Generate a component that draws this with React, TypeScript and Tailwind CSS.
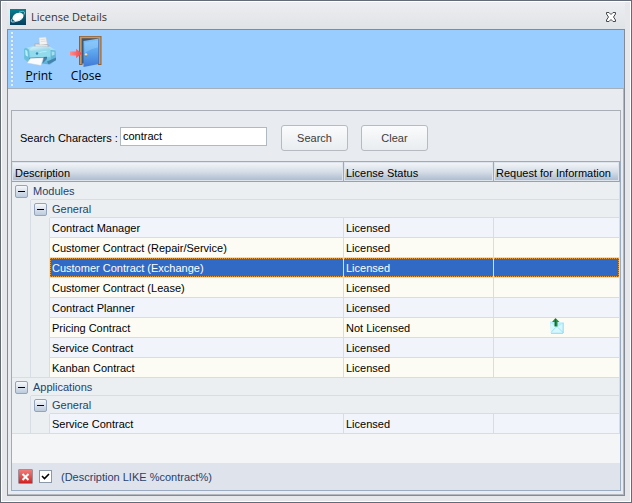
import { Fragment, useState } from "react";

type Row = { description: string; status: string; request?: boolean };
type Module = { name: string; group: string; rows: Row[] };

const modules: Module[] = [
  {
    name: "Modules",
    group: "General",
    rows: [
      { description: "Contract Manager", status: "Licensed" },
      { description: "Customer Contract (Repair/Service)", status: "Licensed" },
      { description: "Customer Contract (Exchange)", status: "Licensed" },
      { description: "Customer Contract (Lease)", status: "Licensed" },
      { description: "Contract Planner", status: "Licensed" },
      { description: "Pricing Contract", status: "Not Licensed", request: true },
      { description: "Service Contract", status: "Licensed" },
      { description: "Kanban Contract", status: "Licensed" },
    ],
  },
  {
    name: "Applications",
    group: "General",
    rows: [{ description: "Service Contract", status: "Licensed" }],
  },
];

function AppLogo() {
  return (
    <svg width="16" height="16" viewBox="0 0 16 16" aria-hidden="true">
      <defs>
        <linearGradient id="logo" x1="0" y1="0" x2="0" y2="1">
          <stop offset="0" stopColor="#07808f" />
          <stop offset="1" stopColor="#043d5c" />
        </linearGradient>
      </defs>
      <rect width="16" height="16" fill="url(#logo)" />
      <path d="M9 3.200c3.500-1.300 6-1 5.600.8-.2 1-1 2-1.600 2.600" fill="none" stroke="#8fc9d2" strokeWidth="0.800" />
      <ellipse cx="8" cy="8" rx="5.700" ry="4" fill="#fff" transform="rotate(-24 8 8)" />
      <path d="M2.500 9.500c-1.500 1.800-1.800 3.200-.5 3.500 2.500.4 7-1.300 10-4" fill="none" stroke="#cfe8ec" strokeWidth="0.900" />
    </svg>
  );
}

function PrinterIcon() {
  return (
    <svg width="34" height="32" viewBox="0 0 34 32" aria-hidden="true">
      <defs>
        <linearGradient id="body" x1="0" y1="0" x2="0" y2="1">
          <stop offset="0" stopColor="#b4e6f3" />
          <stop offset="0.500" stopColor="#86d3ea" />
          <stop offset="1" stopColor="#54acd2" />
        </linearGradient>
        <linearGradient id="lid" x1="0" y1="0" x2="1" y2="1">
          <stop offset="0" stopColor="#d9f4fb" />
          <stop offset="1" stopColor="#8bcfe4" />
        </linearGradient>
      </defs>
      <path d="M17 1.500l7-.5 1.500 8-8 1z" fill="#f3f3f2" stroke="#c4c8cc" strokeWidth="0.600" />
      <path d="M18.500 3.500l5-.4M18.800 5.500l5-.4" stroke="#d4d6d8" strokeWidth="0.700" />
      <path d="M12.500 7.500l4-.8 1.500 2 7.500-.7 2.500 1.500-2.500 2.500H12z" fill="#b3b5b9" />
      <path d="M13.500 8.300l12 .8v1.400l-12 .3z" fill="#e2e3e4" />
      <path d="M4 12l6-1.500 18 .2 5.500 3.300.5 10-6 4.500-8-1-14-1.500-4-3V13z" fill="url(#body)" />
      <path d="M8 13l3-2.300 15.500.3 2 3.200-20 .6z" fill="url(#lid)" />
      <path d="M2 13q1-1.500 3-.8 2 .7 2.300 3l.5 8.800q-4.300 0-5.500-2.500z" fill="#68bfdc" />
      <path d="M3.200 13.800q1.500 0 2.200 1.700l.6 5q-2-.2-2.500-1.500z" fill="#b9edf6" />
      <path d="M28.500 14l5 .5.5 7-5 3z" fill="#64b6d8" />
      <path d="M29.500 15.500l3 .2v3l-2.700 1z" fill="#a5e0ef" />
      <path d="M25 25.500l9-4v2.700l-7.500 4z" fill="#4583ac" />
      <path d="M8 15l20-.7v6.500l-19.700 1.700z" fill="#91dbed" />
      <path d="M7.500 21.800l17.500-1v2l-17.500 1z" fill="#34779d" />
      <path d="M17.500 16.500q3-1 7-1" fill="none" stroke="#c4f1f9" strokeWidth="0.800" />
      <circle cx="15" cy="17.500" r="1.200" fill="#2f8bb4" />
      <path d="M8.500 22.300l13-.5-2.500 7.700-14-2.500z" fill="#f9fbfd" stroke="#b9cedf" strokeWidth="0.500" />
      <path d="M21.700 22.300l3.300.7-4.500 4.500z" fill="#497fa7" />
    </svg>
  );
}

function DoorIcon() {
  return (
    <svg width="34" height="32" viewBox="0 0 34 32" aria-hidden="true">
      <defs>
        <linearGradient id="door" x1="0" y1="0" x2="0" y2="1">
          <stop offset="0" stopColor="#7fc4fb" />
          <stop offset="0.500" stopColor="#5ba3ec" />
          <stop offset="1" stopColor="#4079d6" />
        </linearGradient>
        <linearGradient id="arrow" x1="0" y1="0" x2="1" y2="0">
          <stop offset="0" stopColor="#ff8f8f" />
          <stop offset="1" stopColor="#ee4348" />
        </linearGradient>
      </defs>
      <path d="M10 0h22.500v29H29V3H13.500v26H10z" fill="#8e6238" />
      <path d="M11 .8h20.500V28H30V2.300H12.500V28H11z" fill="#c99660" />
      <path d="M13 2.500h17v25H13z" fill="#3f5874" />
      <path d="M14.500 5L30 2.500V28L14.500 31z" fill="url(#door)" />
      <path d="M15.500 6.500L29 4.500v7c-6 1-10 3-13.500 6z" fill="#a2d6ff" opacity="0.400" />
      <path d="M29.500 3v25" stroke="#3b69b5" strokeWidth="0.600" />
      <path d="M1 15.500h6v-2.700l6 4.700-6 4.700v-2.700H1z" fill="url(#arrow)" />
      <circle cx="17" cy="18.500" r="1.300" fill="#f5dfa6" />
      <path d="M16 20h2" stroke="#8d713b" strokeWidth="0.700" />
    </svg>
  );
}

function MailIcon() {
  return (
    <svg width="14" height="16" viewBox="0 0 14 16" className="mx-auto block" aria-hidden="true">
      <path d="M0 3.500l13 1V15H1z" fill="#b9ecfb" />
      <path d="M1 5l5.500 5L13 5.500V15H1z" fill="#d8f6fe" />
      <path d="M1 14.500l4.500-5M13 14.500L8 9.500" stroke="#8edcf4" strokeWidth="0.800" />
      <path d="M1 15.300h12M13.200 4.500V15" fill="none" stroke="#6bd3f2" strokeWidth="0.800" />
      <path d="M5.500 0l4 4H7.500v4.500h-3V4H2z" fill="#278d46" />
      <path d="M5.500 1v7" stroke="#176a30" strokeWidth="1.200" />
    </svg>
  );
}

function Expander({ open, label, onClick }: { open: boolean; label: string; onClick: () => void }) {
  return (
    <button
      type="button"
      aria-label={label}
      aria-expanded={open}
      onClick={onClick}
      className="ml-[3px] flex size-[13px] items-center justify-center rounded-[2px] border border-[#93a4bc] bg-linear-to-b from-[#f6f8fb] to-[#bccbdd]"
    >
      <svg width="7" height="7" viewBox="0 0 7 7" aria-hidden="true">
        <path d={open ? "M0 3h7v1H0z" : "M0 3h3V0h1v3h3v1H4v3H3V4H0z"} fill="#000" />
      </svg>
    </button>
  );
}

const heading =
  "h-5 whitespace-nowrap border-b border-r border-[#8ea3bd] border-r-[#98aac0] px-0 pt-[2px] pb-0 text-left font-normal shadow-[inset_0_0_0_1px_#dde4ec]";
const line = "border-[#d6dde6]";
const focusBox = "h-[19px] border-y border-dotted border-[#e39a3c] leading-[19px]";
const plainBox = "h-[19px] leading-[21px]";
const pushButton =
  "h-[26px] w-[67px] rounded-[3px] border border-[#b6bbc2] bg-linear-to-b from-[#fafbfc] to-[#e9edf0] text-[#3c3c3c]";

export default function App() {
  const [text, setText] = useState("contract");
  const [filter, setFilter] = useState("contract");
  const [filterOn, setFilterOn] = useState(true);
  const [selected, setSelected] = useState("Customer Contract (Exchange)");
  const [closed, setClosed] = useState<string[]>([]);
  const toggle = (key: string) =>
    setClosed(closed.includes(key) ? closed.filter((k) => k !== key) : [...closed, key]);

  return (
    <div className="flex min-h-screen flex-col border border-[#636b78] bg-[#e5e7eb] font-['Liberation_Sans',Arial,sans-serif] text-[11px] leading-4 text-black">
      <div className="flex grow flex-col border border-white px-[5px] pb-[5px]">
        <header className="flex h-[27px] items-center bg-linear-to-b from-[#ededf2] to-[#e0e4e6] pl-[3px] pr-2 pt-[2px]">
          <AppLogo />
          <h1 className="ml-[5px] grow font-['Open_Sans','Noto_Sans',sans-serif] text-[11px] text-[#333]">License Details</h1>
          <button type="button" aria-label="Close window">
            <svg width="12" height="10" viewBox="0 0 12 10" className="block" aria-hidden="true">
              <path
                d="M1.500.5h2.500l2 2 2-2h2.500v1.500L8.500 5l2 3v1.500H8l-2-2-2 2H1.500V8l2-3-2-3z"
                fill="#fff"
                stroke="#45494f"
                strokeWidth="1"
              />
            </svg>
          </button>
        </header>

        <main className="flex grow flex-col border border-[#858b94] bg-[#e8ebf0]">
          <nav className="flex h-[59px] border-b border-[#a9afb8] bg-[#99ccff] pl-[3px] font-['Open_Sans','Noto_Sans',sans-serif] text-[12px]">
            <div className="my-[2px] w-[3px] bg-[radial-gradient(circle_at_1px_1px,#e2effc_1px,#7ba9d8_2px,transparent_2px)] bg-[length:3px_4px]" />
            <button type="button" className="ml-[3px] flex w-[44px] flex-col items-center pt-[6px]">
              <PrinterIcon />
              <span><u>P</u>rint</span>
            </button>
            <button type="button" className="ml-[3px] flex w-[44px] flex-col items-center pt-[6px]">
              <DoorIcon />
              <span>C<u>l</u>ose</span>
            </button>
          </nav>

          <div className="flex grow flex-col border-r border-b border-[#b3b7bf] pl-[3px] pb-[3px] pt-[21px] pr-[2px]">
            <form
              className="flex h-[51px] items-center border border-b-0 border-[#a9adb5] px-2 pt-1"
              onSubmit={(e) => {
                e.preventDefault();
                setFilter(text);
              }}
            >
              <label htmlFor="characters" className="w-[100px] whitespace-nowrap">Search Characters :</label>
              <input
                id="characters"
                value={text}
                onChange={(e) => setText(e.target.value)}
                className="mb-1 h-[19px] w-[147px] border border-[#b0b8c0] bg-white px-[2px] outline-none"
              />
              <button type="submit" className={`ml-[14px] ${pushButton}`}>Search</button>
              <button type="button" onClick={() => setText("")} className={`ml-[13px] ${pushButton}`}>Clear</button>
            </form>

            <section className="flex grow flex-col border border-[#9bacc2] bg-[#f4f5f7]">
              <table className="w-full table-fixed border-separate border-spacing-0">
                <colgroup>
                  <col className="w-[19px]" />
                  <col className="w-[19px]" />
                  <col />
                  <col className="w-[150px]" />
                  <col className="w-[126px]" />
                </colgroup>
                <thead>
                  <tr className="bg-linear-to-b from-[#f5f7f9] via-[#d5dde7] to-[#a5b5ca]">
                    <th scope="col" colSpan={3} className={heading}><span className="ml-[3px]">Description</span></th>
                    <th scope="col" className={heading}><span className="ml-[2px]">License Status</span></th>
                    <th scope="col" className={heading}><span className="ml-[2px]">Request for Information</span></th>
                  </tr>
                </thead>
                <tbody>
                  {modules.map((m) => {
                    const open = !closed.includes(m.name);
                    const groupKey = m.name + "/" + m.group;
                    const groupOpen = !closed.includes(groupKey);
                    return (
                      <Fragment key={m.name}>
                        <tr className="h-[18px] bg-[#ebeff2] text-[#27416b]">
                          <td className="p-0">
                            <Expander open={open} label={"Toggle " + m.name} onClick={() => toggle(m.name)} />
                          </td>
                          <td colSpan={4} className={`border-b border-r p-0 pl-[2px] ${line}`}>{m.name}</td>
                        </tr>
                        {open && (
                          <tr className="h-[18px] bg-[#ebeff2] text-[#27416b]">
                            <td className={`border-r p-0 ${line}`} />
                            <td className="p-0">
                              <Expander open={groupOpen} label={"Toggle " + m.group} onClick={() => toggle(groupKey)} />
                            </td>
                            <td colSpan={3} className={`border-b border-r p-0 pl-[2px] ${line}`}>{m.group}</td>
                          </tr>
                        )}
                        {open && groupOpen &&
                          m.rows.map((r, i) => {
                            const active = m.name === "Modules" && r.description === selected;
                            const tone = active
                              ? "bg-[#316ac5] text-white"
                              : i % 2 ? "bg-[#fcfcf4]" : "bg-[#f1f4fa]";
                            const last = i === m.rows.length - 1 ? "border-b" : "";
                            const box = active ? focusBox : plainBox;
                            return (
                              <tr key={r.description} onClick={() => setSelected(r.description)}>
                                <td className={`border-r bg-[#ebeff2] p-0 ${last} ${line}`} />
                                <td className={`border-r bg-[#ebeff2] p-0 ${last} ${line}`} />
                                <td className={`border-b border-r p-0 ${line} ${tone}`}>
                                  <div className={`${box} ${active ? "border-l pl-px" : "pl-[2px]"}`}>{r.description}</div>
                                </td>
                                <td className={`border-b border-r p-0 ${line} ${tone}`}>
                                  <div className={`pl-[2px] ${box}`}>{r.status}</div>
                                </td>
                                <td className={`border-b border-r p-0 ${line} ${tone}`}>
                                  <div className={`${box} ${active ? "border-r" : ""}`}>{r.request && <MailIcon />}</div>
                                </td>
                              </tr>
                            );
                          })}
                      </Fragment>
                    );
                  })}
                </tbody>
              </table>

              <footer className="mt-auto flex h-[27px] items-center bg-[#dfe4ec] pl-[6px] text-[#27416b]">
                <button
                  type="button"
                  aria-label="Remove filter"
                  onClick={() => setFilterOn(false)}
                  className="flex size-[15px] items-center justify-center rounded-[1px] border border-[#9c8f98] bg-linear-to-b from-[#f07a78] to-[#cf1c20]"
                >
                  <svg width="9" height="8" viewBox="0 0 9 8" aria-hidden="true">
                    <path d="M1.500 1l6 6M7.500 1l-6 6" stroke="#fff" strokeWidth="2" />
                  </svg>
                </button>
                <label className="ml-[6px] flex items-center gap-[9px]">
                  <span className="grid size-[13px] place-items-center">
                    <input
                      type="checkbox"
                      checked={filterOn}
                      onChange={(e) => setFilterOn(e.target.checked)}
                      className="peer col-start-1 row-start-1 size-[13px] appearance-none border border-[#8b98aa] bg-white"
                    />
                    <svg width="9" height="9" viewBox="0 0 9 9" className="invisible col-start-1 row-start-1 peer-checked:visible" aria-hidden="true">
                      <path d="M1 4l2.500 2.500L8 2" fill="none" stroke="#000" strokeWidth="1.600" />
                    </svg>
                  </span>
                  <span>(Description LIKE %{filter}%)</span>
                </label>
              </footer>
            </section>
          </div>
        </main>
      </div>
    </div>
  );
}
